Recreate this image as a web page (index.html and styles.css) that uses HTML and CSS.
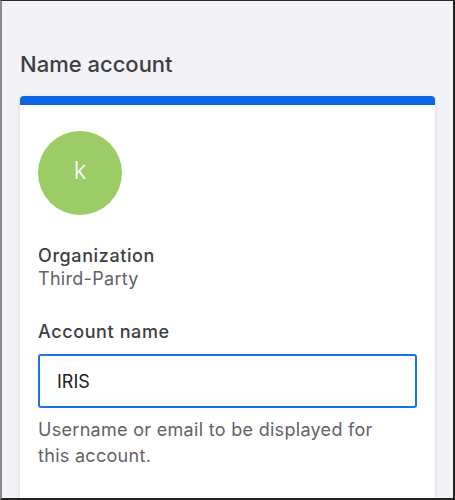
FILE: index.html
```html
<!DOCTYPE html>
<html lang="en">
<head>
	<meta charset="UTF-8">
	<title>Name account</title>
	<link rel="stylesheet" href="styles.css">
</head>
<body>
	<div class="frame">
		<h1 class="title">Name account</h1>
		<div class="card">
			<div class="avatar">k</div>
			<div class="org">
				<p class="label">Organization</p>
				<p class="value">Third-Party</p>
			</div>
			<label class="label" for="name">Account name</label>
			<input type="text" id="name" class="ipt" value="IRIS">
			<p class="help">Username or email to be displayed for this account.</p>
		</div>
	</div>
</body>
</html>
```

FILE: styles.css
```css
*{margin: 0;padding: 0;box-sizing: border-box;}
body{font-family: Inter, "Liberation Sans", Arial, sans-serif;background: #fff;}
.frame{width: 455px;height: 500px;overflow: hidden;background: #f2f2f7;border-top: 1px solid #2a2a2a;border-left: 2px solid #8a8a8a;border-right: 2px solid #222;border-bottom: 2px solid #222;padding: 0 18px 0 18px;}
.title{font-size: 22px;font-weight: 500;color: #3c4043;padding-top: 50px;line-height: 26px;}
.card{margin-top: 19px;background: #fff;border-top: 9px solid #0b66e4;border-radius: 4px 4px 0 0;box-shadow: 0 1px 4px rgba(0,0,0,0.12);height: 420px;padding: 26px 18px 0 18px;}
.avatar{width: 84px;height: 84px;border-radius: 50%;background: #9ccc65;color: #fff;font-size: 24px;font-weight: 300;line-height: 80px;text-align: center;}
.org{margin-top: 30px;}
.label{display: block;font-size: 18px;font-weight: 500;color: #3c4043;line-height: 22px;letter-spacing: 0.6px;}
.value{font-size: 18px;color: #5f6368;line-height: 24px;letter-spacing: 0.3px;}
label.label{margin-top: 30px;}
.ipt{display: block;width: 100%;height: 54px;margin-top: 11px;border: 2px solid #1a73e8;border-radius: 3px;padding: 0 17px;font-family: inherit;font-size: 18px;color: #202124;outline: none;}
.help{margin-top: 9px;font-size: 18px;color: #5f6368;line-height: 26px;width: 360px;letter-spacing: 0.3px;}
```
